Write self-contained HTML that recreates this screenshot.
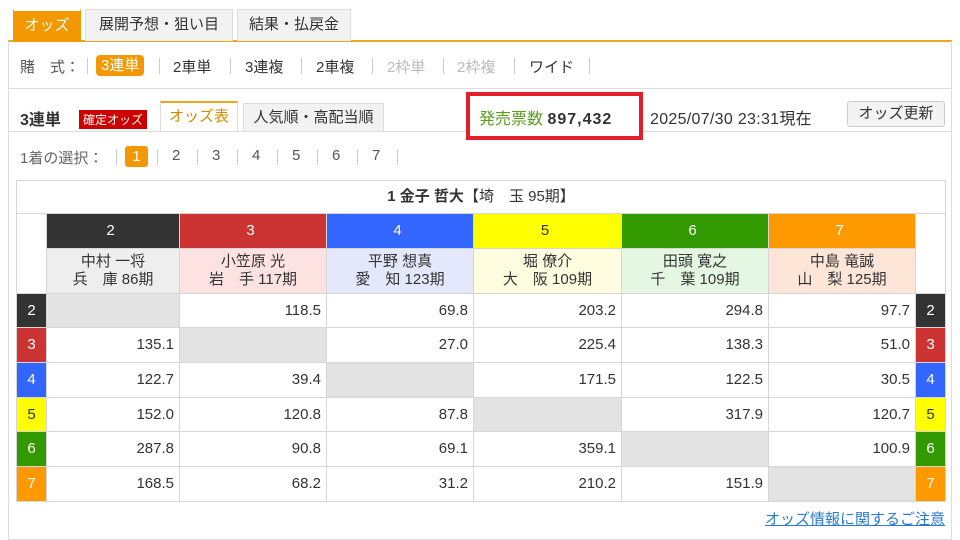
<!DOCTYPE html>
<html><head><meta charset="utf-8"><style>
*{margin:0;padding:0;box-sizing:border-box}
body{width:960px;height:535px;background:#fff;font-family:"Liberation Sans","Noto Sans CJK JP",sans-serif;color:#333;position:relative;overflow:hidden;font-size:15px}
.a{position:absolute;white-space:nowrap}
.tab{position:absolute;top:9px;height:32px;line-height:30px;text-align:center;font-size:15px;background:#f2f2f2;border:1px solid #ddd;border-bottom:none}
.s{position:absolute;width:1px;height:16px;background:#ccc}
table{position:absolute;left:16px;top:180px;border-collapse:collapse;width:929px;table-layout:fixed}
td{border:1px solid #d6d6d6;font-size:15px;height:34.7px;text-align:right;padding-right:5px;line-height:18px}
td.g{background:#e3e3e3}
td.l{text-align:center;padding:0;color:#fff}
</style></head><body>
<div class="a" style="left:8px;top:40px;width:944px;height:500px;border:1px solid #ddd;border-top:2px solid #e8a820"></div>
<div class="tab" style="left:13px;width:68px;background:#f39800;color:#fff;border-color:#f39800;top:8px;height:34px;border-top:3px solid #fff;line-height:30px">オッズ</div>
<div class="tab" style="left:85px;width:148px">展開予想・狙い目</div>
<div class="tab" style="left:237px;width:114px">結果・払戻金</div>
<div class="a" style="left:9px;top:88px;width:942px;height:1px;background:#ddd"></div>
<div class="a" style="left:20px;top:56px;color:#555">賭　式：</div>
<div class="s" style="left:87px;top:58px"></div>
<div class="a" style="left:96px;top:55px;background:#f39800;color:#fff;border-radius:4px;padding:0 5px;height:21px;line-height:21px">3連単</div>
<div class="s" style="left:159px;top:58px"></div>
<div class="a" style="left:173px;top:56px">2車単</div>
<div class="s" style="left:230px;top:58px"></div>
<div class="a" style="left:245px;top:56px">3連複</div>
<div class="s" style="left:301px;top:58px"></div>
<div class="a" style="left:316px;top:56px">2車複</div>
<div class="s" style="left:372px;top:58px"></div>
<div class="a" style="left:387px;top:56px;color:#bbb">2枠単</div>
<div class="s" style="left:443px;top:58px"></div>
<div class="a" style="left:457px;top:56px;color:#bbb">2枠複</div>
<div class="s" style="left:514px;top:58px"></div>
<div class="a" style="left:529px;top:56px">ワイド</div>
<div class="s" style="left:589px;top:58px"></div>
<div class="a" style="left:20px;top:106px;font-size:16px;font-weight:bold">3連単</div>
<div class="a" style="left:79px;top:110px;background:#c00;color:#fff;font-size:12px;padding:1px 4px">確定オッズ</div>
<div class="a" style="left:160px;top:101px;width:78px;height:31px;border:1px solid #ddd;border-top:2px solid #e8a820;border-bottom:none;background:#fff;color:#d48a00;text-align:center;line-height:28px">オッズ表</div>
<div class="a" style="left:243px;top:103px;width:141px;height:29px;border:1px solid #ddd;border-bottom:none;background:#f2f2f2;text-align:center;line-height:28px">人気順・高配当順</div>
<div class="a" style="left:9px;top:131px;width:942px;height:1px;background:#ddd"></div>
<div class="a" style="left:466px;top:92px;width:177px;height:48px;border:4px solid #e3202a;background:#fff"></div>
<div class="a" style="left:479px;top:105px;font-size:16px;color:#5a9e1e">発売票数 <b style="color:#333;letter-spacing:1px">897,432</b></div>
<div class="a" style="left:650px;top:105px;font-size:16px;letter-spacing:.3px">2025/07/30 23:31現在</div>
<div class="a" style="left:847px;top:101px;width:98px;height:26px;border:1px solid #ccc;border-radius:3px;background:#f3f3f3;text-align:center;line-height:24px;font-size:15px">オッズ更新</div>
<div class="a" style="left:20px;top:147px;color:#666">1着の選択：</div>
<div class="s" style="left:116px;top:149px"></div>
<div class="a" style="left:125px;top:146px;background:#f39800;color:#fff;border-radius:3px;width:23px;height:21px;text-align:center;line-height:21px">1</div>
<div class="s" style="left:157px;top:149px"></div>
<div class="a" style="left:172px;top:147px;color:#555">2</div>
<div class="s" style="left:197px;top:149px"></div>
<div class="a" style="left:212px;top:147px;color:#555">3</div>
<div class="s" style="left:237px;top:149px"></div>
<div class="a" style="left:252px;top:147px;color:#555">4</div>
<div class="s" style="left:277px;top:149px"></div>
<div class="a" style="left:292px;top:147px;color:#555">5</div>
<div class="s" style="left:317px;top:149px"></div>
<div class="a" style="left:332px;top:147px;color:#555">6</div>
<div class="s" style="left:357px;top:149px"></div>
<div class="a" style="left:372px;top:147px;color:#555">7</div>
<div class="s" style="left:397px;top:149px"></div>
<table>
<colgroup><col style="width:30px"><col style="width:133px"><col style="width:147px"><col style="width:147px"><col style="width:148px"><col style="width:147px"><col style="width:147px"><col style="width:30px"></colgroup>
<tr><td colspan="8" style="text-align:center;height:33px;padding:0"><b>1 金子 哲大</b>【埼　玉 95期】</td></tr>
<tr style="color:#fff"><td style="border:none;border-left:1px solid #d6d6d6" class="l" rowspan="2"></td>
<td style="background:#333;text-align:center;height:34px">2</td><td style="background:#cc3333;text-align:center">3</td><td style="background:#3366ff;text-align:center">4</td><td style="background:#ffff00;color:#333;text-align:center">5</td><td style="background:#339900;text-align:center">6</td><td style="background:#ff9900;text-align:center">7</td><td class="l" rowspan="2" style="border:none;border-right:1px solid #d6d6d6"></td></tr>
<tr style="line-height:19px"><td style="background:#eee;text-align:center;height:45px;padding:0">中村 一将<br>兵　庫 86期</td><td style="background:#fde2e2;text-align:center;padding:0">小笠原 光<br>岩　手 117期</td><td style="background:#e4e8fb;text-align:center;padding:0">平野 想真<br>愛　知 123期</td><td style="background:#fffde0;text-align:center;padding:0">堀 僚介<br>大　阪 109期</td><td style="background:#e3f7e3;text-align:center;padding:0">田頭 寛之<br>千　葉 109期</td><td style="background:#fde6d8;text-align:center;padding:0">中島 竜誠<br>山　梨 125期</td></tr>
<tr><td class="l" style="background:#333">2</td><td class="g"></td><td>118.5</td><td>69.8</td><td>203.2</td><td>294.8</td><td>97.7</td><td class="l" style="background:#333">2</td></tr>
<tr><td class="l" style="background:#cc3333">3</td><td>135.1</td><td class="g"></td><td>27.0</td><td>225.4</td><td>138.3</td><td>51.0</td><td class="l" style="background:#cc3333">3</td></tr>
<tr><td class="l" style="background:#3366ff">4</td><td>122.7</td><td>39.4</td><td class="g"></td><td>171.5</td><td>122.5</td><td>30.5</td><td class="l" style="background:#3366ff">4</td></tr>
<tr><td class="l" style="background:#ffff00;color:#333">5</td><td>152.0</td><td>120.8</td><td>87.8</td><td class="g"></td><td>317.9</td><td>120.7</td><td class="l" style="background:#ffff00;color:#333">5</td></tr>
<tr><td class="l" style="background:#339900">6</td><td>287.8</td><td>90.8</td><td>69.1</td><td>359.1</td><td class="g"></td><td>100.9</td><td class="l" style="background:#339900">6</td></tr>
<tr><td class="l" style="background:#ff9900">7</td><td>168.5</td><td>68.2</td><td>31.2</td><td>210.2</td><td>151.9</td><td class="g"></td><td class="l" style="background:#ff9900">7</td></tr>
</table>
<div class="a" style="right:15px;top:508px;font-size:15px;color:#2a7ad0;text-decoration:underline">オッズ情報に関するご注意</div>
</body></html>
